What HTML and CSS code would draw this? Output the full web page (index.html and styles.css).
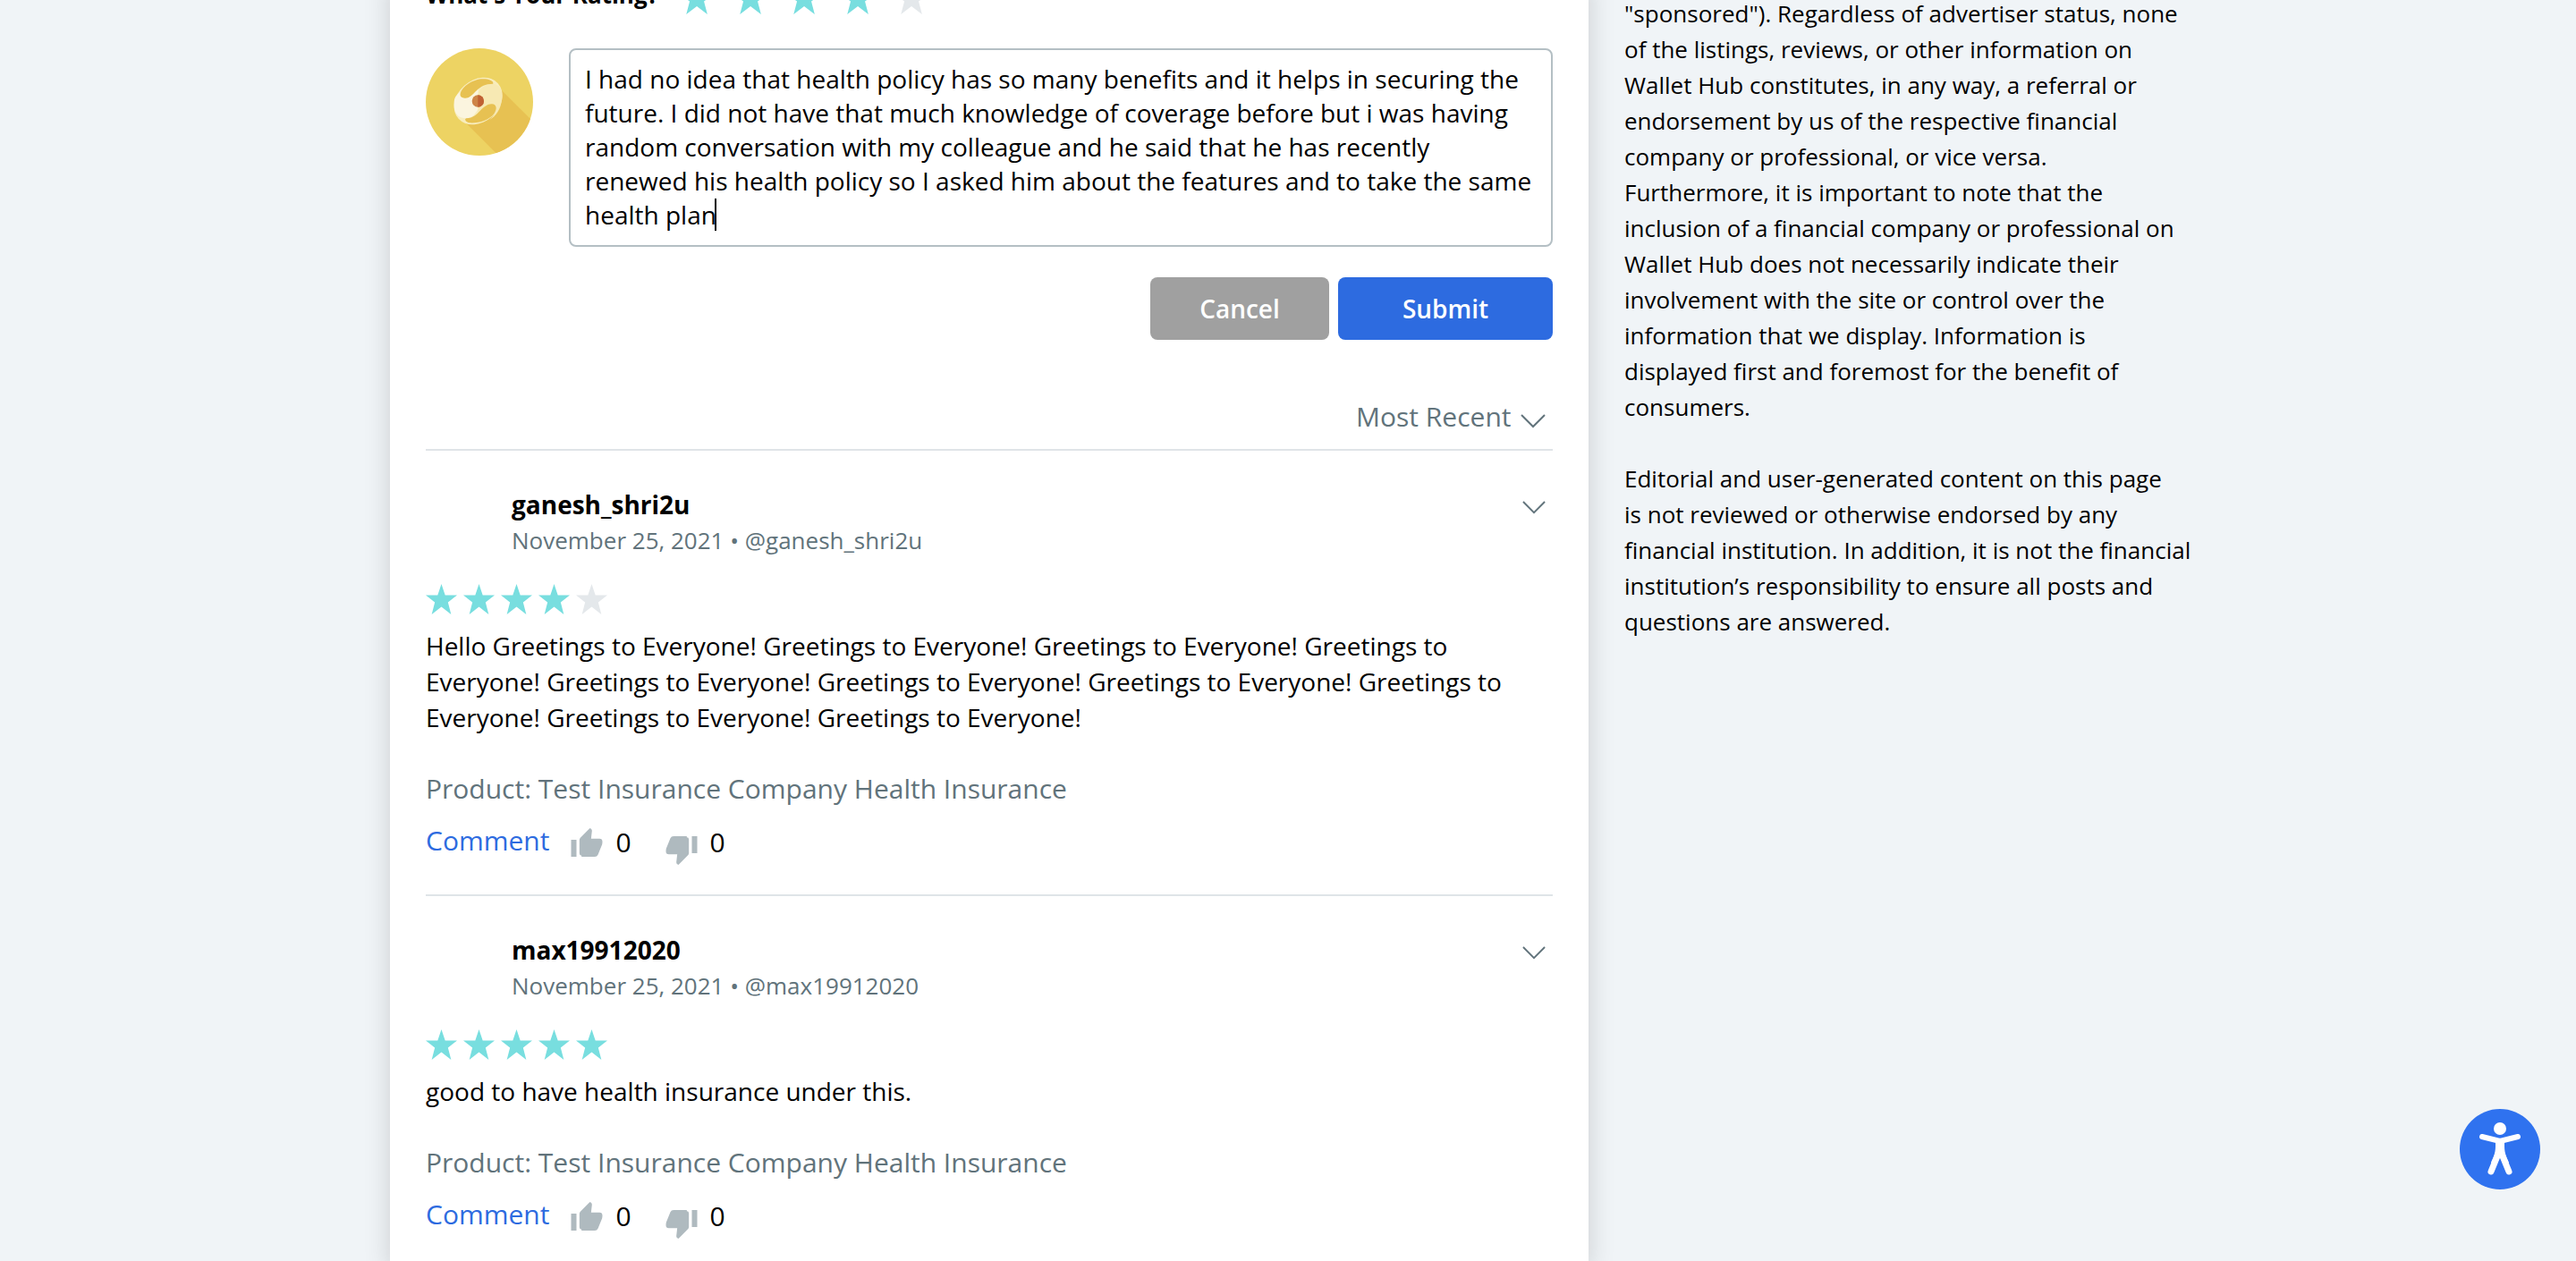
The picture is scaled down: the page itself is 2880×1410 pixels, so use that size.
FILE: index.html
```html
<!DOCTYPE html>
<html lang="en">
<head>
<meta charset="utf-8">
<title>Test Insurance Company Reviews</title>
<link rel="stylesheet" href="styles.css">
</head>
<body>
<svg class="sprite" aria-hidden="true">
  <symbol id="chevron" viewBox="0 0 28 16"><path d="M1 1l13 13L27 1" fill="none" stroke="currentColor" stroke-width="2"/></symbol>
  <symbol id="thumb" viewBox="27 42 105 96"><path d="M27 81h18v57H27zM62 138h44q8 0 11-7l14-34q1-4 1-10 0-10-10-10H94l3-26q0-5-3-7l-4-2-32 32q-3 3-3 8v45q0 7 7 7z" fill="currentColor"/></symbol>
</svg>
<div class="page">
  <main class="card">
    <form class="review-form">
      <div class="rating">
        <h2 class="rating-title" id="rating-title">What's Your Rating?</h2>
        <div class="rating-stars" role="radiogroup" aria-labelledby="rating-title">
          <input class="star" type="radio" name="rating" value="1" aria-label="1 star">
          <input class="star" type="radio" name="rating" value="2" aria-label="2 stars">
          <input class="star" type="radio" name="rating" value="3" aria-label="3 stars">
          <input class="star" type="radio" name="rating" value="4" aria-label="4 stars" checked>
          <input class="star star-empty" type="radio" name="rating" value="5" aria-label="5 stars">
        </div>
      </div>
      <div class="compose">
        <svg class="avatar" viewBox="18 18 360 360" role="img" aria-label="Your avatar">
          <clipPath id="disc"><circle cx="198" cy="198" r="180"/></clipPath>
          <circle cx="198" cy="198" r="180" fill="#edd363"/>
          <path d="M236 122L378 264V378H262L128 244z" fill="#e7c152" clip-path="url(#disc)"/>
          <g transform="rotate(-42 194 195)">
            <ellipse cx="194" cy="195" rx="89" ry="70" fill="#f8edbd"/>
          </g>
          <path d="M114 190C108 232 124 253 152 253C176 253 184 236 194 222V140C170 160 166 185 148 185C138 184 131 178 133 165C120 175 116 182 114 190z" fill="#fbf5df"/>
          <path d="M193 170C204 148 220 138 240 137C264 137 278 158 273 190C270 222 254 246 232 258C250 242 256 226 253 214C248 200 228 204 214 220C206 230 200 236 193 238z" fill="#f7e9b3"/>
          <path d="M134 172C138 146 178 121 210 121C228 121 246 127 244 137C216 137 204 146 190 158C172 176 164 185 150 185C140 185 133 181 134 172z" fill="#e7c152"/>
          <path d="M165 268C152 266 146 256 154 253C178 252 188 240 200 228C214 214 226 204 240 205C256 206 258 222 248 236C232 258 196 270 165 268z" fill="#e7c152"/>
          <circle cx="193" cy="195" r="20" fill="#ce8447"/>
          <path d="M193 175a20 20 0 0 1 0 40z" fill="#c06133"/>
        </svg>
        <div class="editor">
          <textarea class="review-text" aria-label="Your review" rows="5" spellcheck="false">I had no idea that health policy has so many benefits and it helps in securing the
future. I did not have that much knowledge of coverage before but i was having
random conversation with my colleague and he said that he has recently
renewed his health policy so I asked him about the features and to take the same
health plan</textarea>
          <span class="caret"></span>
        </div>
      </div>
      <div class="form-actions">
        <button class="button button-cancel" type="button">Cancel</button>
        <button class="button button-submit" type="submit">Submit</button>
      </div>
    </form>

    <div class="sort-bar">
      <div class="sort">
        <select class="sort-select" aria-label="Sort reviews"><option>Most Recent</option></select>
        <svg class="sort-chevron" aria-hidden="true"><use href="#chevron"/></svg>
      </div>
    </div>

    <article class="review">
      <header class="review-header">
        <div>
          <h3 class="author">ganesh_shri2u</h3>
          <p class="meta">November 25, 2021 • @ganesh_shri2u</p>
        </div>
        <button class="review-menu" type="button" aria-label="Review options"><svg><use href="#chevron"/></svg></button>
      </header>
      <div class="score" role="img" aria-label="4 out of 5 stars"><i></i><i></i><i></i><i></i><i class="star-empty"></i></div>
      <p class="body">Hello Greetings to Everyone! Greetings to Everyone! Greetings to Everyone! Greetings to<br>Everyone! Greetings to Everyone! Greetings to Everyone! Greetings to Everyone! Greetings to<br>Everyone! Greetings to Everyone! Greetings to Everyone!</p>
      <p class="product">Product: Test Insurance Company Health Insurance</p>
      <div class="review-actions">
        <a class="comment" href="#comment">Comment</a>
        <button class="vote" type="button" aria-label="Helpful"><svg><use href="#thumb"/></svg>0</button>
        <button class="vote vote-down" type="button" aria-label="Not helpful"><svg><use href="#thumb"/></svg>0</button>
      </div>
    </article>

    <article class="review">
      <header class="review-header">
        <div>
          <h3 class="author">max19912020</h3>
          <p class="meta">November 25, 2021 • @max19912020</p>
        </div>
        <button class="review-menu" type="button" aria-label="Review options"><svg><use href="#chevron"/></svg></button>
      </header>
      <div class="score" role="img" aria-label="5 out of 5 stars"><i></i><i></i><i></i><i></i><i></i></div>
      <p class="body">good to have health insurance under this.</p>
      <p class="product">Product: Test Insurance Company Health Insurance</p>
      <div class="review-actions">
        <a class="comment" href="#comment">Comment</a>
        <button class="vote" type="button" aria-label="Helpful"><svg><use href="#thumb"/></svg>0</button>
        <button class="vote vote-down" type="button" aria-label="Not helpful"><svg><use href="#thumb"/></svg>0</button>
      </div>
    </article>
  </main>

  <aside class="disclaimer">
    <p>"sponsored"). Regardless of advertiser status, none<br>of the listings, reviews, or other information on<br>Wallet Hub constitutes, in any way, a referral or<br>endorsement by us of the respective financial<br>company or professional, or vice versa.<br>Furthermore, it is important to note that the<br>inclusion of a financial company or professional on<br>Wallet Hub does not necessarily indicate their<br>involvement with the site or control over the<br>information that we display. Information is<br>displayed first and foremost for the benefit of<br>consumers.</p>
    <p>Editorial and user-generated content on this page<br>is not reviewed or otherwise endorsed by any<br>financial institution. In addition, it is not the financial<br>institution’s responsibility to ensure all posts and<br>questions are answered.</p>
  </aside>
</div>

<button class="accessibility" type="button" aria-label="Accessibility options">
  <svg viewBox="0 0 90 90" fill="none" stroke="#fff" stroke-linecap="round" stroke-linejoin="round">
    <circle cx="45" cy="22" r="7" fill="#fff" stroke="none"/>
    <path d="M25 31L45 36L65 31" stroke-width="6"/>
    <path d="M40 36h10v6c0 8 3 13 5 18l-4 4-6-10-6 10-4-4c2-5 5-10 5-18z" fill="#fff" stroke="none"/>
    <path d="M44 48L35 70M46 48L55 70" stroke-width="7"/>
  </svg>
</button>
</body>
</html>
```
FILE: styles.css
```css
* {
  box-sizing: border-box;
}

html,
body {
  height: 100%;
}

body {
  margin: 0;
  overflow: hidden;
  background: #f0f4f7;
  color: #000;
  font: 28px/40px "Open Sans", "Noto Sans", sans-serif;
}

h2,
h3,
p {
  margin: 0;
}

button,
select,
textarea {
  font: inherit;
  color: inherit;
}

button {
  border: 0;
  padding: 0;
  background: none;
  cursor: pointer;
}

.sprite {
  position: absolute;
  width: 0;
  height: 0;
}

.page {
  display: grid;
  grid-template-columns: minmax(0, 1340fr) minmax(0, 628fr);
  gap: 40px;
  max-width: 2008px;
  min-height: 100%;
  margin: -20px auto 0;
}

.card {
  padding: 0 40px;
  background: #fff;
  box-shadow: 0 0 28px rgba(0, 0, 0, 0.16);
}

/* Rating */

.rating {
  display: flex;
  align-items: flex-start;
  gap: 24px;
  margin-bottom: 38px;
}

.rating-title {
  font-size: 26px;
  line-height: 28px;
}

.rating-stars {
  display: flex;
  gap: 22px;
}

.star,
.score i {
  background: #78dedf;
  clip-path: polygon(50% 0, 62% 37%, 100% 37%, 71% 60%, 81% 100%, 50% 75%, 19% 100%, 29% 60%, 0 37%, 38% 37%);
}

.star {
  appearance: none;
  width: 38px;
  height: 36px;
  margin: 0;
}

.star.star-empty,
.score .star-empty {
  background: #e4e8eb;
}

/* Review form */

.compose {
  display: flex;
  gap: 40px;
}

.avatar {
  flex: none;
  width: 120px;
  height: 120px;
}

.editor {
  position: relative;
  flex: 1;
}

.review-text {
  display: block;
  width: 100%;
  height: 222px;
  padding: 13px 16px;
  border: 2px solid #b4bfc4;
  border-radius: 8px;
  outline: 0;
  background: #fff;
  line-height: 38px;
  resize: none;
  overflow: hidden;
}

.caret {
  position: absolute;
  left: 163px;
  top: 168px;
  width: 2px;
  height: 36px;
  background: #000;
}

.form-actions {
  display: flex;
  justify-content: flex-end;
  gap: 10px;
  margin: 34px 0 66px;
}

.button {
  width: 200px;
  height: 70px;
  border-radius: 8px;
  color: #fff;
  font-weight: 600;
}

.button-cancel {
  background: #a0a0a0;
}

.button-submit {
  width: 240px;
  background: #2d6be0;
}

/* Sorting */

.sort-bar {
  display: flex;
  justify-content: flex-end;
  padding-bottom: 16px;
  border-bottom: 2px solid #dfe4e8;
  color: #61737b;
}

.sort {
  position: relative;
}

.sort-select {
  appearance: none;
  display: block;
  height: 40px;
  padding: 0 46px 0 0;
  border: 0;
  background: none;
  font-size: 30px;
}

.sort-chevron {
  position: absolute;
  right: 8px;
  top: 17px;
  width: 28px;
  height: 16px;
  pointer-events: none;
}

/* Reviews */

.review {
  padding: 40px 0 36px;
  border-bottom: 2px solid #dfe4e8;
}

.review-header {
  display: flex;
  justify-content: space-between;
  align-items: flex-start;
  padding-left: 96px;
}

.author {
  font-size: 28px;
}

.meta {
  color: #61737b;
  font-size: 26px;
}

.review-menu {
  display: flex;
  padding: 16px 8px 8px;
  color: #61737b;
}

.review-menu svg {
  width: 26px;
  height: 15px;
}

.score {
  display: flex;
  gap: 7px;
  margin: 29px 0 15px;
}

.score i {
  width: 35px;
  height: 34px;
}

.product {
  margin: 40px 0 18px;
  color: #61737b;
  font-size: 30px;
}

.review-actions {
  display: flex;
  align-items: flex-start;
  height: 44px;
  font-size: 30px;
}

.comment {
  margin-right: 24px;
  color: #2d6be0;
  text-decoration: none;
}

.vote {
  display: flex;
  align-items: center;
  gap: 14px;
  height: 44px;
  margin-right: 38px;
  line-height: 44px;
}

.vote svg {
  width: 36px;
  height: 32px;
  color: #afbabf;
}

.vote-down svg {
  margin-top: 18px;
  transform: rotate(180deg);
}

/* Sidebar */

.disclaimer {
  padding-top: 15px;
  font-size: 26px;
  white-space: nowrap;
}

.disclaimer p {
  margin-bottom: 40px;
}

.accessibility {
  position: fixed;
  right: 40px;
  bottom: 80px;
  width: 90px;
  height: 90px;
  border-radius: 50%;
  background: #2f72ef;
}

.accessibility svg {
  display: block;
}
```
